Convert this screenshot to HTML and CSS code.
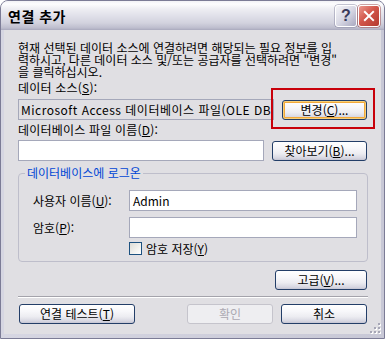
FILE: index.html
```html
<!DOCTYPE html>
<html lang="ko">
<head>
<meta charset="utf-8">
<title>연결 추가</title>
<link rel="stylesheet" href="styles.css">
</head>
<body>
<div class="window">
  <div class="titlebar">
    <span class="title">연결 추가</span>
    <div class="tb-buttons">
      <div class="tb-btn help">?</div>
      <div class="tb-btn close">
        <svg width="22" height="22" viewBox="0 0 22 22"><path d="M6.5 6.5 L15.5 15.5 M15.5 6.5 L6.5 15.5" stroke="#fff" stroke-width="2.2" stroke-linecap="square" fill="none"/></svg>
      </div>
    </div>
  </div>
  <div class="client">
    <p class="desc">현재 선택된 데이터 소스에 연결하려면 해당되는 필요 정보를 입<br>력하시고, 다른 데이터 소스 및/또는 공급자를 선택하려면 "변경"<br>을 클릭하십시오.</p>
    <div class="label">데이터 소스(<u>S</u>):</div>
    <div class="row row1">
      <div class="field readonly src">Microsoft Access 데이터베이스 파일(OLE DB)</div>
      <button class="btn default w-change">변경(<u>C</u>)...</button>
    </div>
    <div class="label">데이터베이스 파일 이름(<u>D</u>):</div>
    <div class="row row2">
      <div class="field file"></div>
      <button class="btn w-browse">찾아보기(<u>B</u>)...</button>
    </div>
    <fieldset class="group">
      <legend>데이터베이스에 로그온</legend>
      <div class="group-body">
        <span class="glabel">사용자 이름(<u>U</u>):</span>
        <div class="field">Admin</div>
        <span class="glabel">암호(<u>P</u>):</span>
        <div class="field"></div>
        <span></span>
        <div class="check"><span class="box"></span><span>암호 저장(<u>Y</u>)</span></div>
      </div>
    </fieldset>
    <div class="adv-row"><button class="btn w-adv">고급(<u>V</u>)...</button></div>
    <div class="sep"></div>
    <div class="bottom-row">
      <button class="btn w-test">연결 테스트(<u>T</u>)</button>
      <div class="right-btns">
        <button class="btn disabled w-ok" disabled>확인</button>
        <button class="btn w-cancel">취소</button>
      </div>
    </div>
    <svg class="grip" width="12" height="12" viewBox="0 0 12 12">
      <g fill="#ffffff"><rect x="10" y="2" width="2" height="2"/><rect x="6" y="6" width="2" height="2"/><rect x="10" y="6" width="2" height="2"/><rect x="2" y="10" width="2" height="2"/><rect x="6" y="10" width="2" height="2"/><rect x="10" y="10" width="2" height="2"/></g>
      <g fill="#a6a6b6"><rect x="9" y="1" width="2" height="2"/><rect x="5" y="5" width="2" height="2"/><rect x="9" y="5" width="2" height="2"/><rect x="1" y="9" width="2" height="2"/><rect x="5" y="9" width="2" height="2"/><rect x="9" y="9" width="2" height="2"/></g>
    </svg>
  </div>
  <div class="mark"></div>
</div>
</body>
</html>
```

FILE: styles.css
```css
* { box-sizing: border-box; }
html, body { margin: 0; padding: 0; background: #ffffff; }
body {
  font-family: "Noto Sans CJK KR", sans-serif;
  font-size: 12px;
  line-height: 12px;
  color: #000;
}
u { text-decoration: underline; text-underline-offset: 1px; }

.window {
  position: relative;
  width: 385px;
  height: 339px;
  border: 1px solid #7c7c96;
  border-radius: 8px 8px 0 0;
  background: linear-gradient(to right, #d6d6e2, #c8c8d6);
  display: flex;
  flex-direction: column;
  overflow: hidden;
}

.titlebar {
  height: 29px;
  flex: none;
  display: flex;
  align-items: center;
  justify-content: space-between;
  padding: 0 4px 0 7px;
  background: linear-gradient(to bottom, #f2f2f6 0px, #fdfdfe 3px, #eeeef3 8px, #e0e0e9 15px, #d2d2de 22px, #bdbdcd 27px, #a9a9bd 29px);
}
.title {
  font-weight: bold;
  font-size: 14px;
  line-height: 14px;
  color: #000;
  padding-top: 1px;
  letter-spacing: 0.5px;
}
.tb-buttons { display: flex; gap: 1px; padding-top: 1px; }
.tb-btn {
  width: 22px;
  height: 22px;
  border: 1px solid #ffffff;
  border-radius: 3px;
  display: flex;
  align-items: center;
  justify-content: center;
}
.help {
  background: linear-gradient(135deg, #f4f4f8 0%, #d8d8e4 50%, #a8a8c0 100%);
  box-shadow: 0 0 0 0.5px #8a8aa4;
  font-family: "Liberation Sans", sans-serif;
  font-weight: bold;
  font-size: 16px;
  color: #3a3a5a;
}
.close {
  background: linear-gradient(135deg, #ec9a90 0%, #d2564a 45%, #b43a30 100%);
  box-shadow: 0 0 0 0.5px #9c4a4a;
}
.close svg { display: block; }

.client {
  position: relative;
  flex: 1;
  margin: 0 3px 4px 3px;
  background: #e0dfe3;
  padding: 12px 13px 0 14px;
}

.desc {
  margin: 0;
  white-space: nowrap;
  line-height: 12px;
}
.label { margin-top: 4px; line-height: 12px; letter-spacing: 0.2px; }

.row { display: flex; align-items: center; justify-content: space-between; }
.row1 { margin-top: 5px; }
.row2 { margin-top: 4px; }

.field {
  height: 21px;
  background: #ffffff;
  border: 1px solid #a5a8ba;
  padding: 0 3px;
  display: flex;
  align-items: center;
  white-space: nowrap;
  overflow: hidden;
}
.field.readonly { background: #e0dfe3; padding-left: 2px; letter-spacing: 0.5px; }
.src { width: 256px; }
.file { width: 246px; }

.btn {
  font-family: inherit;
  font-size: 12px;
  line-height: 12px;
  color: #000;
  height: 20px;
  padding: 0;
  border: 1px solid #233e68;
  border-radius: 3px;
  background: linear-gradient(to bottom, #ffffff 0%, #f7f7fa 35%, #ececf1 65%, #d6d6e1 90%, #c4c4d2 100%);
  display: flex;
  align-items: center;
  justify-content: center;
  margin-right: 1px;
}
.btn.default {
  box-shadow: inset 0 0 0 1px #f7cf78, inset 0 0 0 2px #f2a93b;
}
.btn.disabled {
  border-color: #c5c4cc;
  background: #eeeef1;
  color: #aca9b2;
}
.w-change { width: 85px; }
.w-browse { width: 95px; }
.w-adv { width: 92px; }
.w-test { width: 116px; margin-left: 1px; }
.w-ok { width: 86px; }
.w-cancel { width: 86px; }

.group {
  margin: 6px 0 0 0;
  padding: 0;
  border: 1px solid #bebecb;
  border-radius: 4px;
  min-inline-size: 0;
}
.group legend {
  margin-left: 6px;
  padding: 0 2px;
  color: #0046d5;
  line-height: 12px;
}
.group-body {
  display: grid;
  grid-template-columns: 96px 228px;
  row-gap: 6px;
  padding: 11px 10px 6px 14px;
  align-items: center;
}
.group-body .check { margin-top: -2px; }
.check { display: flex; align-items: center; gap: 4px; }
.box {
  width: 13px;
  height: 13px;
  border: 1px solid #1c5180;
  background: linear-gradient(135deg, #dcdcd7 0%, #f2f2ef 60%, #ffffff 100%);
  flex: none;
}

.adv-row { margin-top: 8px; display: flex; justify-content: flex-end; }
.sep {
  margin-top: 6px;
  height: 2px;
  border-top: 1px solid #a4a3ab;
  border-bottom: 1px solid #ffffff;
}
.bottom-row {
  margin-top: 6px;
  display: flex;
  justify-content: space-between;
}
.right-btns { display: flex; gap: 7px; }

.grip { position: absolute; right: 0; bottom: 0; display: block; }

.mark {
  position: absolute;
  left: 270px;
  top: 87px;
  width: 104px;
  height: 41px;
  border: 2px solid #c8000a;
}
```
